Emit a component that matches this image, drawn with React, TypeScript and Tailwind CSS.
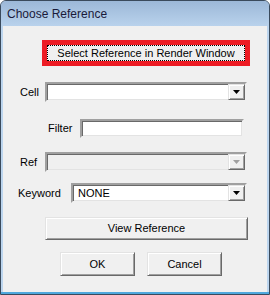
import React from 'react';

const font = "font-['Liberation_Sans',Arial,sans-serif]";

const sunken =
  'border-2 border-t-[#a0a0a0] border-l-[#a0a0a0] border-b-[#f0f0f0] border-r-[#f0f0f0] shadow-[inset_1px_1px_0_#696969,inset_-1px_-1px_0_#e3e3e3]';

const raised =
  'border border-t-[#e3e3e3] border-l-[#e3e3e3] border-b-[#696969] border-r-[#696969] shadow-[inset_1px_1px_0_#ffffff,inset_-1px_-1px_0_#a0a0a0] bg-[#f0f0f0]';

const Arrow = ({ disabled }: { disabled?: boolean }) => (
  <svg width="7" height="4" viewBox="0 0 7 4">
    <path d="M0 0H7L3.5 4Z" fill={disabled ? '#a0a0a0' : '#000'} />
  </svg>
);

const Combo = ({ width, text, disabled }: { width: string; text?: string; disabled?: boolean }) => (
  <div className={`${sunken} ${width} h-[20px] flex items-stretch ${disabled ? 'bg-[#f0f0f0]' : 'bg-white'}`}>
    <div className="flex-1 flex items-center pl-[5px] text-[11px] text-black">{text}</div>
    <div className={`${raised} w-[17px] flex items-center justify-center`}>
      <Arrow disabled={disabled} />
    </div>
  </div>
);

export default function App() {
  return (
    <div className={`${font} w-[270px] h-[295px] flex flex-col border border-[#3a4a5c] rounded-t-[6px] bg-[#bcd5ee] overflow-hidden`}>
      <div className="h-[25px] flex items-center pl-[6px] bg-gradient-to-b from-[#9cb8d8] to-[#b9d2ec] text-[12px] text-[#1a1a3a]">
        Choose Reference
      </div>
      <div className="mx-[2px] flex-1 bg-[#f0f0f0] flex flex-col text-[11px] text-black">
        <div className="mt-[14px] ml-[39px] w-[208px] h-[26px] border-[5px] border-[#ed1c24] bg-[#f0f0f0] flex">
          <div className="flex-1 border border-dotted border-black flex items-center justify-center">
            Select Reference in Render Window
          </div>
        </div>

        <div className="mt-[16px] flex items-center">
          <span className="w-[42px] pl-[17px]">Cell</span>
          <Combo width="w-[202px]" />
        </div>

        <div className="mt-[17px] flex items-center">
          <span className="w-[77px] pl-[45px]">Filter</span>
          <div className={`${sunken} w-[164px] h-[19px] bg-white`} />
        </div>

        <div className="mt-[14px] flex items-center">
          <span className="w-[42px] pl-[17px]">Ref</span>
          <Combo width="w-[202px]" disabled />
        </div>

        <div className="mt-[11px] flex items-center">
          <span className="w-[68px] pl-[15px]">Keyword</span>
          <Combo width="w-[176px]" text="NONE" />
        </div>

        <div className={`${raised} mt-[14px] ml-[42px] w-[203px] h-[23px] flex items-center justify-center`}>
          View Reference
        </div>

        <div className="mt-[12px] flex">
          <div className={`${raised} ml-[57px] w-[75px] h-[24px] flex items-center justify-center`}>OK</div>
          <div className={`${raised} ml-[12px] w-[75px] h-[24px] flex items-center justify-center`}>Cancel</div>
        </div>
      </div>
      <div className="h-[2px] mx-[-1px] bg-[#4fa8dd]" />
    </div>
  );
}
